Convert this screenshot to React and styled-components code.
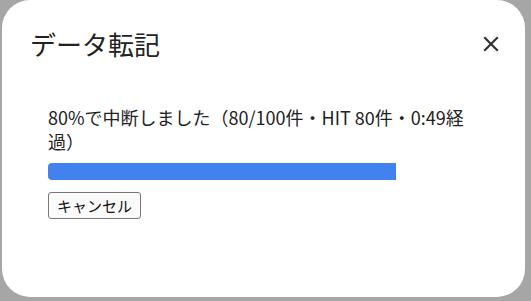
import React from "react"
import styled, { createGlobalStyle } from "styled-components"

const GlobalStyle = createGlobalStyle`
    html, body {
        margin:0;
        padding:0;
        background:#a6a6a6;
    }
    body {
        font-family:"Noto Sans CJK JP", "Noto Sans", sans-serif;
        color:#222;
    }
`

export default function App() {
    const done = 80
    const total = 100

    return (
        <React.Fragment>
            <GlobalStyle />
            <Backdrop>
                <Dialog>
                    <Header>
                        <Title>データ転記</Title>
                        <CloseButton aria-label="閉じる">
                            <svg width="16" height="16" viewBox="0 0 16 16">
                                <path d="M2 2 L14 14 M14 2 L2 14" stroke="#333" strokeWidth="2.2" strokeLinecap="square" />
                            </svg>
                        </CloseButton>
                    </Header>
                    <Body>
                        <Message>80%で中断しました（80/100件・HIT 80件・0:49経過）</Message>
                        <Track>
                            <Fill style={{ width: `${(done / total) * 100}%` }} />
                        </Track>
                        <div>
                            <CancelButton>キャンセル</CancelButton>
                        </div>
                    </Body>
                </Dialog>
            </Backdrop>
        </React.Fragment>
    )
}

const Backdrop = styled.div`
    width:531px;
    height:301px;
    box-sizing:border-box;
    padding:0 6px 4px 2px;
    display:flex;
`

const Dialog = styled.div`
    flex:1;
    background:#fff;
    border-radius:28px;
    display:flex;
    flex-direction:column;
`

const Header = styled.div`
    display:flex;
    align-items:center;
    justify-content:space-between;
    padding:25px 26px 0 28px;
`

const Title = styled.h2`
    margin:0;
    font-size:26px;
    font-weight:400;
    line-height:38px;
    color:#222;
`

const CloseButton = styled.button`
    border:none;
    background:none;
    padding:0;
    width:16px;
    height:16px;
    display:flex;
    cursor:pointer;
`

const Body = styled.div`
    padding:42px 42px 0 46px;
    display:flex;
    flex-direction:column;
`

const Message = styled.p`
    margin:0 0 10px;
    font-size:18px;
    line-height:24px;
    color:#222;
`

const Track = styled.div`
    height:17px;
    border-radius:4px;
    overflow:hidden;
    margin-bottom:12px;
`

const Fill = styled.div`
    height:100%;
    background:#4182ee;
`

const CancelButton = styled.button`
    font-family:"Noto Sans CJK JP", sans-serif;
    font-size:15px;
    line-height:19px;
    padding:3px 8px;
    color:#111;
    background:#fafafa;
    border:1px solid #777;
    border-radius:3px;
`
